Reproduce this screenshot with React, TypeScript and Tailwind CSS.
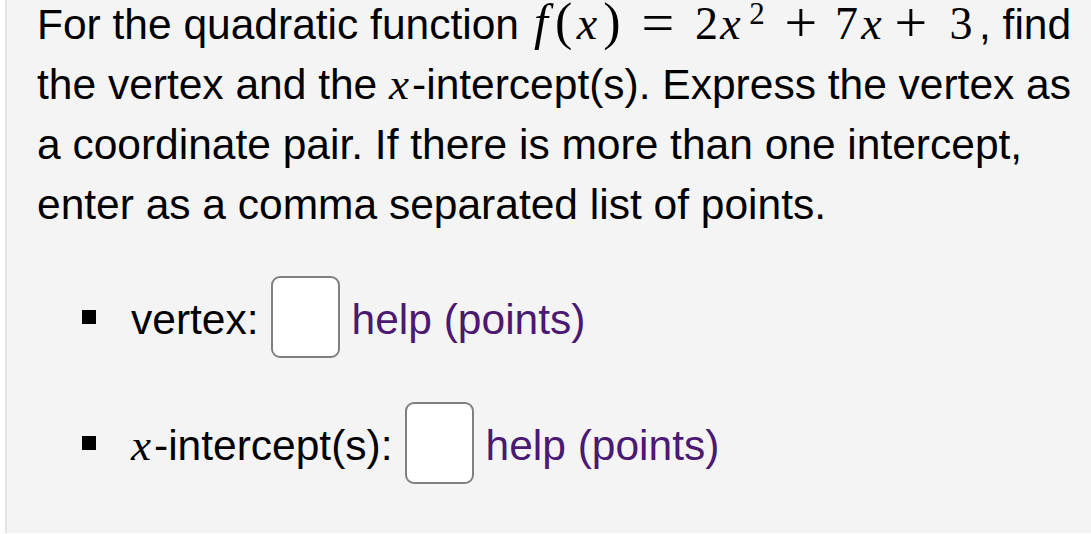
import React from 'react';

const serif = "font-['Liberation_Serif','DejaVu_Serif',serif]";

function MathX() {
  return <span className={`${serif} italic text-[45px] leading-none mr-[3px]`}>x</span>;
}

// one math glyph, centred in a box of fixed width so it sits where TeX puts it
function G({ w, className = '', children }: { w: string; className?: string; children: React.ReactNode }) {
  return <span className={`inline-block text-center leading-[40px] ${w} ${className}`}>{children}</span>;
}

function Equation() {
  return (
    <span className={`${serif} whitespace-nowrap ml-[8px]`}>
      <G w="w-[28px]" className="italic text-[50px]">f</G>
      <G w="w-[16px]" className="text-[52px]">(</G>
      <G w="w-[32px]" className="italic text-[46px]">x</G>
      <G w="w-[18px]" className="text-[52px]">)</G>
      <G w="w-[74px]" className="text-[58px] relative top-[3px]">=</G>
      <G w="w-[19px]" className="text-[46px]">2</G>
      <G w="w-[33px]" className="italic text-[46px]">x</G>
      <G w="w-[20px]" className="text-[31px] relative -top-[15px]">2</G>
      <G w="w-[68px]" className="text-[58px] relative top-[3px]">+</G>
      <G w="w-[19px]" className="text-[46px]">7</G>
      <G w="w-[35px]" className="italic text-[46px]">x</G>
      <G w="w-[44px]" className="text-[58px] relative top-[3px]">+</G>
      <G w="w-[36px]" className="text-[46px] ml-[10px]">3</G>
      <span className="font-['Liberation_Sans',Arial,sans-serif]">,</span>
    </span>
  );
}

function Item({ label }: { label: React.ReactNode }) {
  return (
    <li className="flex items-center h-[82px]">
      <span className="w-[14px] h-[14px] bg-black ml-[45px] mr-[35px]" />
      <span className="mt-[5px] flex items-baseline">{label}</span>
      <span className="ml-[12px] w-[69px] h-[82px] border-2 border-[#808080] rounded-[9px] bg-white" />
      <a className="ml-[12px] mt-[5px] text-[#4b1872] cursor-pointer">help (points)</a>
    </li>
  );
}

export default function App() {
  return (
    <div className="w-[1091px] h-[534px] bg-white overflow-hidden">
      <div className="ml-[5px] h-[533px] flex flex-col border-l-2 border-[#e2e2e2] bg-[#f4f4f4] pl-[30px] text-black font-['Liberation_Sans',Arial,sans-serif] text-[42.5px] leading-[60px]">
        <p className="-mt-[5px] whitespace-nowrap">
          For the quadratic function<Equation /> find
          <br />
          the vertex and the <MathX />-intercept(s). Express the vertex as
          <br />
          a coordinate pair. If there is more than one intercept,
          <br />
          enter as a comma separated list of points.
        </p>
        <ul className="mt-[41px] flex flex-col gap-[44px]">
          <Item label="vertex:" />
          <Item
            label={
              <>
                <MathX />
                -intercept(s):
              </>
            }
          />
        </ul>
      </div>
    </div>
  );
}
